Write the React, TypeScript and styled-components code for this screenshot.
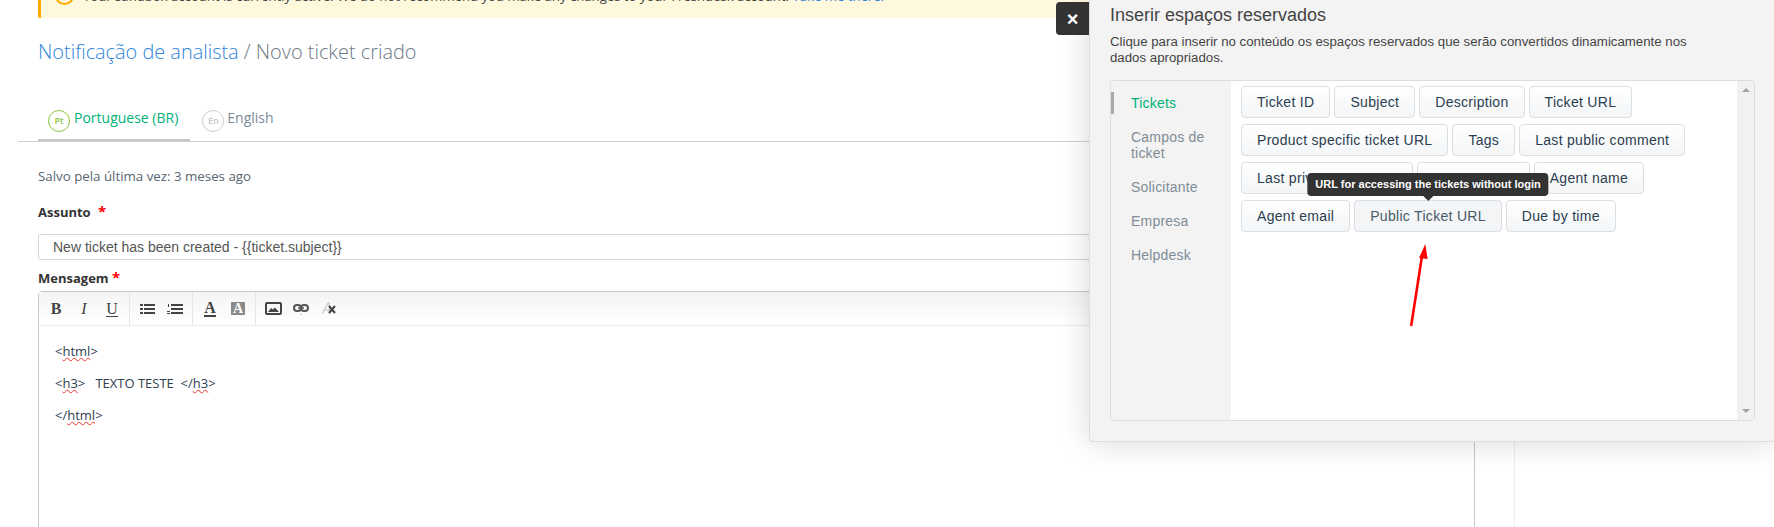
import React from "react";
import styled, { createGlobalStyle } from "styled-components";

const GlobalStyle = createGlobalStyle`
  html, body {
    margin: 0;
    padding: 0;
    background: #fff;
    font-family: "Open Sans", "Liberation Sans", sans-serif;
  }
`;

const placeholderRows = [
  "Ticket ID",
  "Subject",
  "Description",
  "Ticket URL",
  "Product specific ticket URL",
  "Tags",
  "Last public comment",
  "Last private comment",
  "Group name",
  "Agent name",
  "Agent email",
  "Public Ticket URL",
  "Due by time",
];

export default function App() {
  return (
    <>
      <GlobalStyle />
      <Page>
        <Main>
          <Banner>
            <BannerInner>
              <BannerIcon>!</BannerIcon>
              <span>
                Your sandbox account is currently active. We do not recommend you make any changes to your Freshdesk account.{" "}
                <a>Take me there.</a>
              </span>
            </BannerInner>
          </Banner>
          <Title>
            <a>Notificação de analista</a> / Novo ticket criado
          </Title>
          <Tabs>
            <Tab $active>
              <LangCircle $active>Pt</LangCircle>
              <span>Portuguese (BR)</span>
            </Tab>
            <Tab>
              <LangCircle>En</LangCircle>
              <span>English</span>
            </Tab>
          </Tabs>
          <Form>
            <Saved>Salvo pela última vez: 3 meses ago</Saved>
            <Label>
              Assunto <Star>*</Star>
            </Label>
            <Input>New ticket has been created - {"{{ticket.subject}}"}</Input>
            <Label $compact>
              Mensagem <Star $near>*</Star>
            </Label>
            <Editor>
              <Toolbar>
                <ToolGroup>
                  <Tool>
                    <Glyph $bold>B</Glyph>
                  </Tool>
                  <Tool>
                    <Glyph $italic>I</Glyph>
                  </Tool>
                  <Tool>
                    <Glyph $under>U</Glyph>
                  </Tool>
                </ToolGroup>
                <ToolGroup>
                  <Tool>
                    <svg width="15" height="10" viewBox="0 0 15 10" fill="#444">
                      <rect x="0" y="0" width="3" height="2" />
                      <rect x="4" y="0" width="11" height="2" />
                      <rect x="0" y="4" width="3" height="2" />
                      <rect x="4" y="4" width="11" height="2" />
                      <rect x="0" y="8" width="3" height="2" />
                      <rect x="4" y="8" width="11" height="2" />
                    </svg>
                  </Tool>
                  <Tool>
                    <svg width="16" height="10" viewBox="0 0 16 10" fill="#444">
                      <rect x="1" y="0" width="1" height="3" />
                      <rect x="0" y="7" width="3" height="1" />
                      <rect x="0" y="9" width="3" height="1" />
                      <rect x="4" y="0" width="12" height="2" />
                      <rect x="4" y="4" width="12" height="2" />
                      <rect x="4" y="8" width="12" height="2" />
                    </svg>
                  </Tool>
                </ToolGroup>
                <ToolGroup>
                  <Tool>
                    <Glyph $bold $bar>
                      A
                    </Glyph>
                  </Tool>
                  <Tool>
                    <FilledGlyph>A</FilledGlyph>
                  </Tool>
                </ToolGroup>
                <ToolGroup $last>
                  <Tool>
                    <svg width="17" height="13" viewBox="0 0 17 13">
                      <rect x="1" y="1" width="15" height="11" rx="1" fill="none" stroke="#444" strokeWidth="2" />
                      <path d="M3 10 L6 6 L8 7.5 L10 5.5 L14 10 Z" fill="#444" />
                    </svg>
                  </Tool>
                  <Tool>
                    <svg width="16" height="14" viewBox="0 0 16 14" fill="none">
                      <rect x="1" y="3" width="7" height="6" rx="3" stroke="#555" strokeWidth="2" />
                      <rect x="8" y="3" width="7" height="6" rx="3" stroke="#555" strokeWidth="2" />
                      <path d="M5 6 H11" stroke="#555" strokeWidth="1.5" />
                      <path d="M7 12 H9 L8 13 Z" fill="#999" />
                    </svg>
                  </Tool>
                  <Tool>
                    <svg width="16" height="13" viewBox="0 0 16 13" fill="none">
                      <path d="M1 12 L7 1 H8 L9 12 M3.5 8 H9" stroke="#bbb" strokeWidth="1" />
                      <path d="M8 4 L14 11 M14 4 L8 11" stroke="#444" strokeWidth="2" />
                    </svg>
                  </Tool>
                </ToolGroup>
              </Toolbar>
              <EditorBody>
                <p>
                  &lt;<Misspelled>html</Misspelled>&gt;
                </p>
                <p>
                  &lt;<Misspelled>h3</Misspelled>&gt;&nbsp;&nbsp; TEXTO TESTE &nbsp;&lt;/<Misspelled>h3</Misspelled>&gt;
                </p>
                <p>
                  &lt;/<Misspelled>html</Misspelled>&gt;
                </p>
              </EditorBody>
            </Editor>
          </Form>
        </Main>

        <Modal>
          <CloseButton>×</CloseButton>
          <ModalTitle>Inserir espaços reservados</ModalTitle>
          <ModalText>
            Clique para inserir no conteúdo os espaços reservados que serão convertidos dinamicamente nos dados apropriados.
          </ModalText>
          <PickerPanel>
            <PickerNav>
              <NavItem $active>Tickets</NavItem>
              <NavItem>Campos de ticket</NavItem>
              <NavItem>Solicitante</NavItem>
              <NavItem>Empresa</NavItem>
              <NavItem>Helpdesk</NavItem>
            </PickerNav>
            <PickerBody>
              {placeholderRows.map((name) => (
                <PlaceholderButton key={name} $hover={name === "Public Ticket URL"}>
                  {name}
                  {name === "Public Ticket URL" && <Tooltip>URL for accessing the tickets without login</Tooltip>}
                </PlaceholderButton>
              ))}
            </PickerBody>
            <Scrollbar>
              <ScrollArrow />
              <ScrollArrow $down />
            </Scrollbar>
          </PickerPanel>
          <RedArrow width="30" height="90" viewBox="0 0 30 90">
            <path d="M6.3 85 L17 16" stroke="#f00" strokeWidth="2.6" strokeLinecap="round" fill="none" />
            <path d="M20.3 4 L14 18 L22.6 19 Z" fill="#f00" />
          </RedArrow>
        </Modal>
      </Page>
    </>
  );
}

const Page = styled.div`
  position: relative;
  width: 1774px;
  height: 527px;
  overflow: hidden;
  background: #fff;
`;

const Main = styled.div`
  width: 1515px;
  height: 527px;
  box-sizing: border-box;
  padding-left: 18px;
  border-right: 1px solid #ececec;
`;

const Banner = styled.div`
  height: 18px;
  margin-left: 20px;
  overflow: hidden;
  background: #fef8dc;
  border-left: 3px solid #ffa800;
  border-radius: 0 0 0 2px;
`;

const BannerInner = styled.div`
  display: flex;
  align-items: center;
  gap: 9px;
  margin-top: -14px;
  padding-left: 14px;
  font-size: 13.15px;
  line-height: 18px;
  color: #444;
  white-space: nowrap;

  a {
    color: #2c7fd8;
  }
`;

const BannerIcon = styled.span`
  display: flex;
  align-items: center;
  justify-content: center;
  width: 15px;
  height: 15px;
  border: 2px solid #ffa800;
  border-radius: 50%;
  font-size: 10px;
  color: #ffa800;
`;

const Title = styled.h1`
  margin: 20px 0 0 20px;
  font-size: 19.9px;
  font-weight: 300;
  line-height: 28px;
  color: #6c7a86;
  white-space: nowrap;

  a {
    color: #2f86d9;
  }
`;

const Tabs = styled.div`
  display: flex;
  height: 33px;
  margin-top: 42px;
  padding-left: 20px;
  border-bottom: 1px solid #d0d0d0;
`;

const Tab = styled.div<{ $active?: boolean }>`
  display: flex;
  align-items: flex-start;
  gap: ${(p) => (p.$active ? "4px" : "3px")};
  box-sizing: border-box;
  height: 33px;
  padding: 2px 12px 0 10px;
  margin-right: 2px;
  font-size: 14px;
  line-height: 16px;
  color: ${(p) => (p.$active ? "#00b27a" : "#7b8a97")};
  border-bottom: 2px solid ${(p) => (p.$active ? "#c8c8c8" : "transparent")};
`;

const LangCircle = styled.span<{ $active?: boolean }>`
  display: flex;
  align-items: center;
  justify-content: center;
  box-sizing: border-box;
  width: 22px;
  height: 22px;
  border: 1px solid ${(p) => (p.$active ? "#8cc63f" : "#cfcfcf")};
  border-radius: 50%;
  font-size: 9px;
  font-weight: 600;
  color: ${(p) => (p.$active ? "#8cc63f" : "#c8c8c8")};
`;

const Form = styled.div`
  width: 1437px;
  margin-left: 20px;
`;

const Saved = styled.div`
  margin-top: 26px;
  font-size: 13.3px;
  line-height: 17px;
  color: #566570;
`;

const Label = styled.div<{ $compact?: boolean }>`
  margin-top: ${(p) => (p.$compact ? "8px" : "17px")};
  margin-bottom: ${(p) => (p.$compact ? "4px" : "13px")};
  font-size: 13px;
  font-weight: 700;
  line-height: 18px;
  color: #333;
`;

const Star = styled.span<{ $near?: boolean }>`
  margin-left: ${(p) => (p.$near ? "0" : "4px")};
  font-size: 15px;
  color: #f00;
`;

const Input = styled.div`
  box-sizing: border-box;
  height: 26px;
  padding-left: 14px;
  border: 1px solid #d5d5d5;
  border-radius: 3px;
  font-family: "Liberation Sans", Arial, sans-serif;
  font-size: 14px;
  line-height: 24px;
  color: #555;
`;

const Editor = styled.div`
  height: 300px;
  border: 1px solid #c8c8c8;
  border-radius: 4px 4px 0 0;
`;

const Toolbar = styled.div`
  display: flex;
  height: 33px;
  background: linear-gradient(#f4f4f4, #fff);
  border-bottom: 1px solid #eee;
`;

const ToolGroup = styled.div<{ $last?: boolean }>`
  display: flex;
  align-items: center;
  padding: 0 3px;
  border-right: ${(p) => (p.$last ? "none" : "1px solid #e6e6e6")};
`;

const Tool = styled.div`
  display: flex;
  align-items: center;
  justify-content: center;
  width: 28px;
  height: 28px;
`;

const Glyph = styled.span<{ $bold?: boolean; $italic?: boolean; $under?: boolean; $bar?: boolean }>`
  font-family: "Liberation Serif", serif;
  font-size: 16px;
  line-height: 15px;
  font-weight: ${(p) => (p.$bold ? 700 : 400)};
  font-style: ${(p) => (p.$italic ? "italic" : "normal")};
  color: #444;
  border-bottom: ${(p) => (p.$under || p.$bar ? `${p.$bar ? 2 : 1}px solid #444` : "none")};
`;

const FilledGlyph = styled.span`
  display: block;
  width: 14px;
  height: 13px;
  background: #8a8a8a;
  font-family: "Liberation Serif", serif;
  font-size: 14px;
  font-weight: 700;
  line-height: 13px;
  text-align: center;
  color: #fff;
`;

const EditorBody = styled.div`
  padding: 16px 16px;
  font-size: 13px;
  line-height: 18px;
  color: #2f4050;

  p {
    margin: 0 0 14px;
  }
`;

const Misspelled = styled.span`
  text-decoration: underline wavy #e33 1px;
  text-underline-offset: 1px;
`;

const Modal = styled.div`
  position: absolute;
  top: 0;
  left: 1089px;
  width: 685px;
  height: 442px;
  box-sizing: border-box;
  padding-left: 20px;
  background: #f3f3f3;
  border-left: 1px solid #ddd;
  border-bottom: 1px solid #ddd;
  border-radius: 0 0 4px 4px;
  box-shadow: 0 0 32px rgba(0, 0, 0, 0.16);
  font-family: "Liberation Sans", Arial, sans-serif;
`;

const CloseButton = styled.div`
  position: absolute;
  top: 2px;
  left: -34px;
  display: flex;
  align-items: center;
  justify-content: center;
  width: 33px;
  height: 33px;
  background: #333;
  border-radius: 4px 0 0 4px;
  font-size: 20px;
  font-weight: 700;
  line-height: 1;
  color: #fff;
`;

const ModalTitle = styled.h2`
  margin: 0;
  padding-top: 4px;
  font-size: 18px;
  font-weight: 400;
  line-height: 22px;
  color: #444;
`;

const ModalText = styled.p`
  width: 612px;
  margin: 8px 0 0;
  font-size: 13.25px;
  line-height: 16px;
  color: #444;
`;

const PickerPanel = styled.div`
  display: flex;
  box-sizing: border-box;
  width: 645px;
  height: 341px;
  margin-top: 14px;
  overflow: hidden;
  background: #fff;
  border: 1px solid #ddd;
  border-radius: 4px;
`;

const PickerNav = styled.div`
  width: 120px;
  flex-shrink: 0;
  padding-top: 11px;
  background: #f3f3f3;
`;

const NavItem = styled.div<{ $active?: boolean }>`
  box-sizing: border-box;
  width: 100%;
  padding: 3px 16px 3px 17px;
  margin-bottom: 12px;
  font-size: 14px;
  letter-spacing: 0.2px;
  line-height: 16px;
  color: ${(p) => (p.$active ? "#00b27a" : "#7f8c96")};
  border-left: 3px solid ${(p) => (p.$active ? "#aaa" : "transparent")};
`;

const PickerBody = styled.div`
  flex: 1;
  display: flex;
  flex-wrap: wrap;
  align-content: flex-start;
  gap: 6px 4px;
  padding: 5px 10px;
  min-width: 0;
`;

const PlaceholderButton = styled.div<{ $hover?: boolean }>`
  position: relative;
  box-sizing: border-box;
  height: 32px;
  padding: 0 15px;
  background: ${(p) => (p.$hover ? "#f3f5f7" : "linear-gradient(#fff, #f3f5f7)")};
  border: 1px solid #dadfe3;
  border-radius: 4px;
  font-size: 14px;
  letter-spacing: 0.3px;
  line-height: 30px;
  color: ${(p) => (p.$hover ? "#4a5a68" : "#2c3e50")};
  white-space: nowrap;
`;

const Tooltip = styled.div`
  position: absolute;
  bottom: calc(100% + 5px);
  left: 50%;
  transform: translateX(-50%);
  height: 23px;
  padding: 0 8px;
  background: #333;
  border-radius: 4px;
  font-size: 11px;
  font-weight: 700;
  letter-spacing: 0;
  line-height: 23px;
  color: #fff;

  &::after {
    content: "";
    position: absolute;
    top: 100%;
    left: 50%;
    margin-left: -5px;
    border: 5px solid transparent;
    border-bottom: 0;
    border-top-color: #333;
  }
`;

const Scrollbar = styled.div`
  display: flex;
  flex-direction: column;
  justify-content: space-between;
  align-items: center;
  width: 17px;
  flex-shrink: 0;
  padding: 7px 0;
  box-sizing: border-box;
  background: #f1f1f1;
`;

const ScrollArrow = styled.span<{ $down?: boolean }>`
  width: 0;
  height: 0;
  border-left: 4px solid transparent;
  border-right: 4px solid transparent;
  border-bottom: ${(p) => (p.$down ? "0" : "4px solid #a3a3a3")};
  border-top: ${(p) => (p.$down ? "4px solid #a3a3a3" : "0")};
`;

const RedArrow = styled.svg`
  position: absolute;
  top: 240px;
  left: 315px;
`;
